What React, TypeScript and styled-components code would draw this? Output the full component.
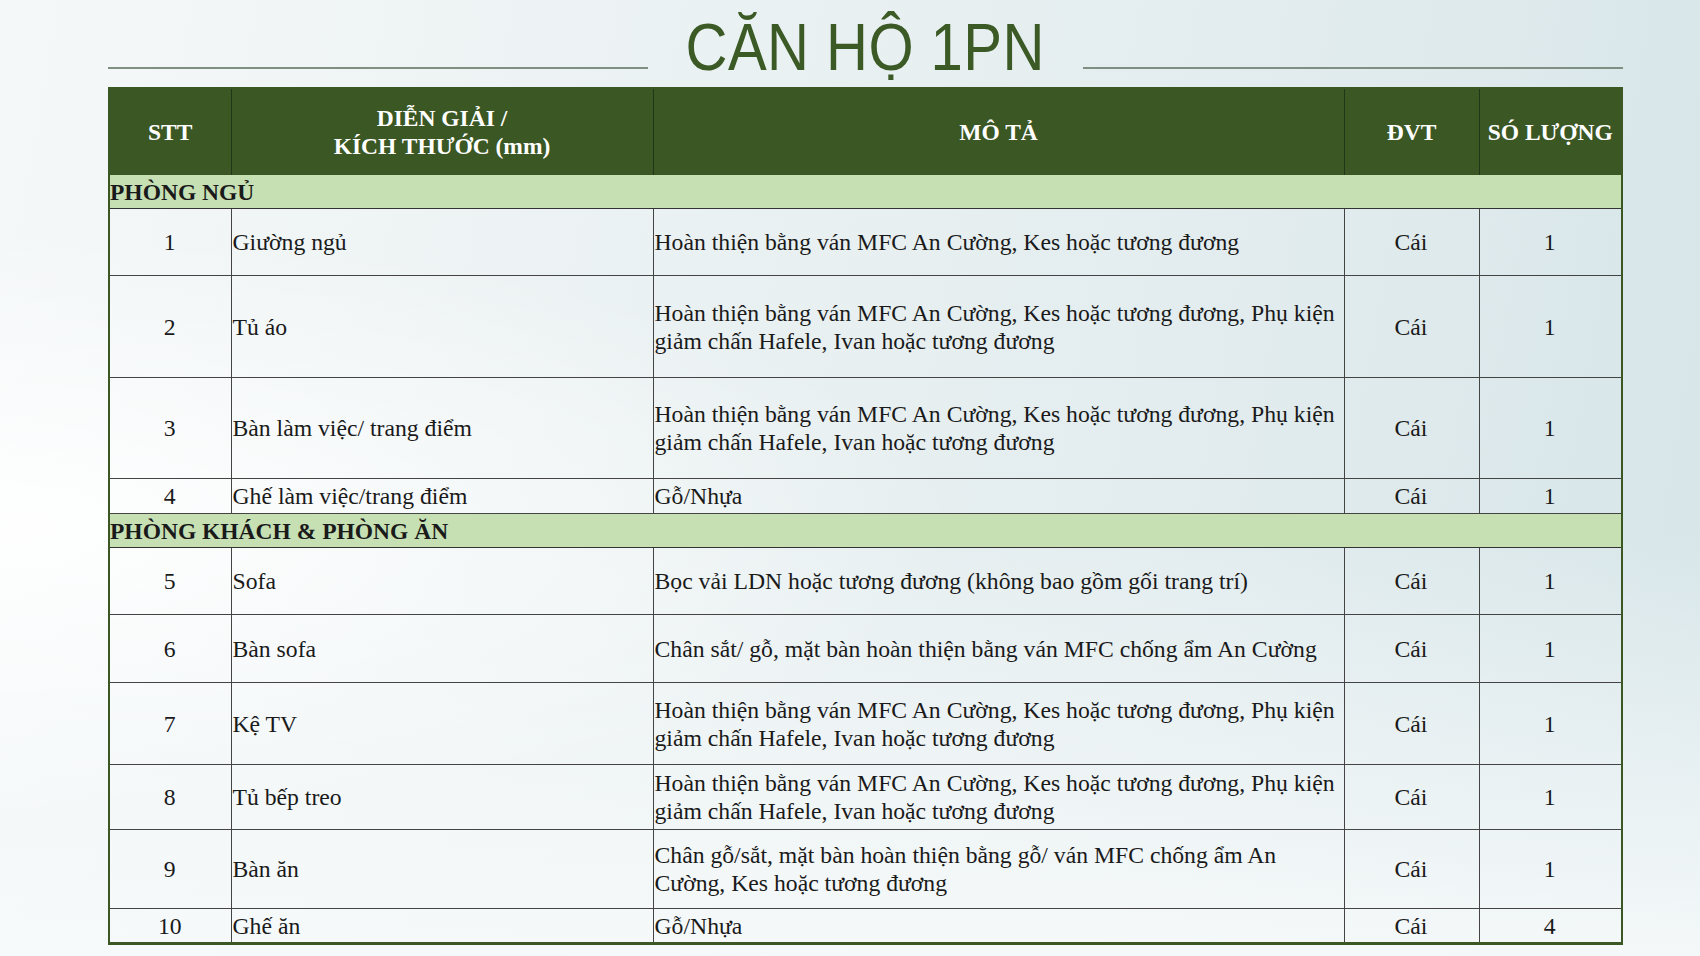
import React, { FC } from 'react';
import styled, { createGlobalStyle } from 'styled-components';

const GlobalStyle = createGlobalStyle`
  html, body {
    margin: 0;
    padding: 0;
  }
  body {
    font-family: 'Liberation Serif', 'Times New Roman', serif;
  }
`;

const Page = styled.div`
  width: 1700px;
  height: 956px;
  box-sizing: border-box;
  padding: 0 77px 0 108px;
  overflow: hidden;
  background:
    radial-gradient(ellipse at 0% 55%, rgba(255, 255, 255, 0.95) 0%, rgba(255, 255, 255, 0) 40%),
    linear-gradient(180deg, rgba(247, 250, 251, 0) 55%, rgba(247, 250, 251, 0.9) 100%),
    linear-gradient(100deg, #f5f8f9 0%, #eaf1f2 40%, #e2ecee 70%, #d6e5e8 100%);
`;

const TitleBar = styled.div`
  display: flex;
  align-items: flex-end;
  height: 87px;
  box-sizing: border-box;
  padding-bottom: 7px;
`;

const Rule = styled.div`
  flex: 1;
  height: 2px;
  background: #7f8f82;
  margin-bottom: 11px;
`;

const Title = styled.h1`
  margin: 0 13px;
  font-family: 'Liberation Sans Narrow', 'Arial Narrow', 'Liberation Sans', sans-serif;
  font-weight: 400;
  font-size: 66px;
  line-height: 1;
  color: #3b5a25;
  letter-spacing: 0.5px;
  transform: scaleX(0.88);
  white-space: nowrap;
`;

const Table = styled.table`
  width: 100%;
  border-collapse: collapse;
  table-layout: fixed;
  border: 2px solid #3b5724;
  border-bottom-width: 3px;
  font-size: 23.7px;
  color: #1a1a1a;
`;

const HeadCell = styled.th`
  background: #3b5724;
  color: #ffffff;
  font-weight: 700;
  font-size: 23.5px;
  line-height: 28px;
  text-align: center;
  padding: 0;
  height: 85px;
  border-left: 1px solid #22361a;
  white-space: nowrap;
  &:first-child {
    border-left: none;
  }
`;

const SectionCell = styled.td`
  background: #c6e0b4;
  font-weight: 700;
  font-size: 23.5px;
  height: 33px;
  padding: 0;
  text-align: left;
  border-top: 1px solid #3b5724;
  border-bottom: 1px solid #333;
  line-height: 30px;
`;

const Cell = styled.td<{ $align?: 'left' | 'center' }>`
  border: 1px solid #444;
  padding: 0 2px 0 1px;
  text-align: ${(p) => p.$align ?? 'center'};
  vertical-align: middle;
  line-height: 28px;
`;

type Item = {
  no: number;
  name: string;
  desc: string;
  qty: number;
  height: number;
};

const bedroom: Item[] = [
  { no: 1, name: 'Giường ngủ', desc: 'Hoàn thiện bằng ván MFC An Cường, Kes hoặc tương đương', qty: 1, height: 67 },
  {
    no: 2,
    name: 'Tủ áo',
    desc: 'Hoàn thiện bằng ván MFC An Cường, Kes hoặc tương đương, Phụ kiện giảm chấn Hafele, Ivan hoặc tương đương',
    qty: 1,
    height: 102,
  },
  {
    no: 3,
    name: 'Bàn làm việc/ trang điểm',
    desc: 'Hoàn thiện bằng ván MFC An Cường, Kes hoặc tương đương, Phụ kiện giảm chấn Hafele, Ivan hoặc tương đương',
    qty: 1,
    height: 101,
  },
  { no: 4, name: 'Ghế làm việc/trang điểm', desc: 'Gỗ/Nhựa', qty: 1, height: 35 },
];

const living: Item[] = [
  { no: 5, name: 'Sofa', desc: 'Bọc vải LDN hoặc tương đương (không bao gồm gối trang trí)', qty: 1, height: 67 },
  { no: 6, name: 'Bàn sofa', desc: 'Chân sắt/ gỗ, mặt bàn hoàn thiện bằng ván MFC chống ẩm An Cường', qty: 1, height: 68 },
  {
    no: 7,
    name: 'Kệ TV',
    desc: 'Hoàn thiện bằng ván MFC An Cường, Kes hoặc tương đương, Phụ kiện giảm chấn Hafele, Ivan hoặc tương đương',
    qty: 1,
    height: 82,
  },
  {
    no: 8,
    name: 'Tủ bếp treo',
    desc: 'Hoàn thiện bằng ván MFC An Cường, Kes hoặc tương đương, Phụ kiện giảm chấn Hafele, Ivan hoặc tương đương',
    qty: 1,
    height: 65,
  },
  {
    no: 9,
    name: 'Bàn ăn',
    desc: 'Chân gỗ/sắt, mặt bàn hoàn thiện bằng gỗ/ ván MFC chống ẩm An Cường, Kes hoặc tương đương',
    qty: 1,
    height: 79,
  },
  { no: 10, name: 'Ghế ăn', desc: 'Gỗ/Nhựa', qty: 4, height: 35 },
];

const ItemRow: FC<{ item: Item }> = ({ item }) => (
  <tr style={{ height: item.height }}>
    <Cell>{item.no}</Cell>
    <Cell $align="left">{item.name}</Cell>
    <Cell $align="left">{item.desc}</Cell>
    <Cell>Cái</Cell>
    <Cell>{item.qty}</Cell>
  </tr>
);

const App: FC = () => (
  <Page>
    <GlobalStyle />
    <TitleBar>
      <Rule />
      <Title>CĂN HỘ 1PN</Title>
      <Rule />
    </TitleBar>

    <Table>
      <colgroup>
        <col style={{ width: 122 }} />
        <col style={{ width: 422 }} />
        <col style={{ width: 691 }} />
        <col style={{ width: 135 }} />
        <col />
      </colgroup>
      <thead>
        <tr>
          <HeadCell>STT</HeadCell>
          <HeadCell>
            DIỄN GIẢI /
            <br />
            KÍCH THƯỚC (mm)
          </HeadCell>
          <HeadCell>MÔ TẢ</HeadCell>
          <HeadCell>ĐVT</HeadCell>
          <HeadCell>SÓ LƯỢNG</HeadCell>
        </tr>
      </thead>
      <tbody>
        <tr>
          <SectionCell colSpan={5}>PHÒNG NGỦ</SectionCell>
        </tr>
        {bedroom.map((item) => (
          <ItemRow key={item.no} item={item} />
        ))}
        <tr>
          <SectionCell colSpan={5}>PHÒNG KHÁCH &amp; PHÒNG ĂN</SectionCell>
        </tr>
        {living.map((item) => (
          <ItemRow key={item.no} item={item} />
        ))}
      </tbody>
    </Table>
  </Page>
);

export default App;
